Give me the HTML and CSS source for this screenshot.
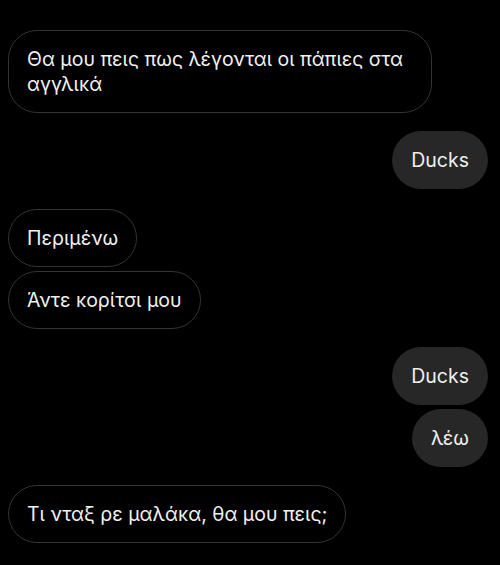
FILE: index.html
```html
<!DOCTYPE html>
<html lang="el">
<head>
<meta charset="utf-8">
<link rel="stylesheet" href="styles.css">
</head>
<body>
<div class="chat">
  <div class="msg in">Θα μου πεις πως λέγονται οι πάπιες στα αγγλικά</div>
  <div class="msg out gap-18">Ducks</div>
  <div class="msg in gap-20">Περιμένω</div>
  <div class="msg in gap-4">Άντε κορίτσι μου</div>
  <div class="msg out gap-18">Ducks</div>
  <div class="msg out gap-4">λέω</div>
  <div class="msg in gap-18">Τι νταξ ρε μαλάκα, θα μου πεις;</div>
</div>
</body>
</html>
```
FILE: styles.css
```css
html, body {
  margin: 0;
  padding: 0;
  background: #000;
}
body {
  width: 500px;
  height: 565px;
  overflow: hidden;
  font-family: Inter, "Noto Sans", "DejaVu Sans", sans-serif;
  color: #f0f0f0;
}
.chat {
  display: flex;
  flex-direction: column;
  padding: 30px 12px 0 8px;
}
.msg {
  box-sizing: border-box;
  max-width: 424px;
  font-size: 19.5px;
  line-height: 25px;
  padding: 16.5px 19px;
  border-radius: 29px;
}
.in {
  align-self: flex-start;
  border: 1px solid #343434;
  padding: 15.5px 18px;
}
.out {
  align-self: flex-end;
  background: #272727;
}
.gap-4 { margin-top: 4px; }
.gap-18 { margin-top: 18px; }
.gap-20 { margin-top: 20px; }
```
